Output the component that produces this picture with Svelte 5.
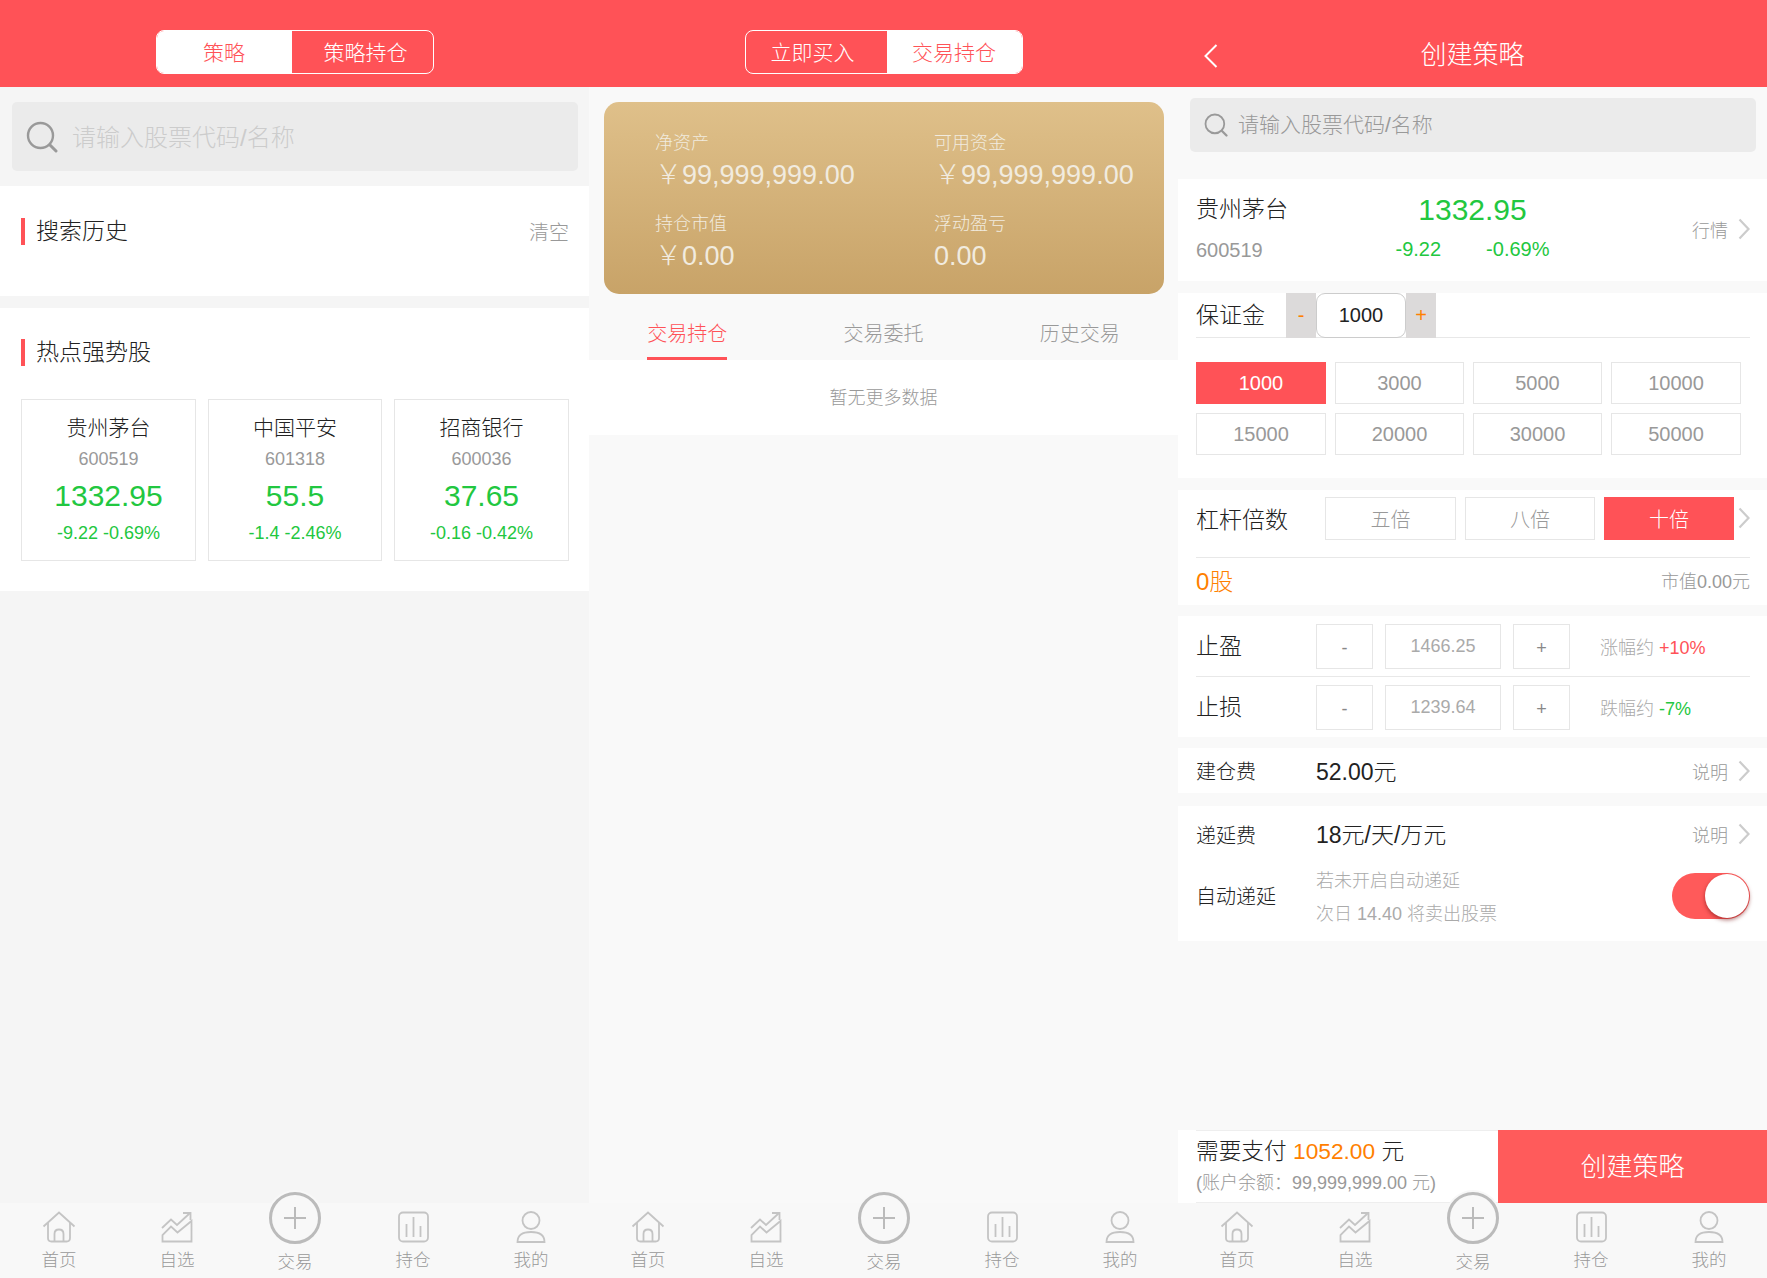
<script>
  const tabs = ["首页", "自选", "交易", "持仓", "我的"];
  const hot = [
    { name: "贵州茅台", code: "600519", price: "1332.95", diff: "-9.22 -0.69%" },
    { name: "中国平安", code: "601318", price: "55.5", diff: "-1.4 -2.46%" },
    { name: "招商银行", code: "600036", price: "37.65", diff: "-0.16 -0.42%" },
  ];
  const assets = [
    { label: "净资产", value: "￥99,999,999.00" },
    { label: "可用资金", value: "￥99,999,999.00" },
    { label: "持仓市值", value: "￥0.00" },
    { label: "浮动盈亏", value: "0.00" },
  ];
  const amounts = [1000, 3000, 5000, 10000, 15000, 20000, 30000, 50000];
  const levers = ["五倍", "八倍", "十倍"];
  const stops = [
    { label: "止盈", value: "1466.25", hint: "涨幅约", pct: "+10%", cls: "red" },
    { label: "止损", value: "1239.64", hint: "跌幅约", pct: "-7%", cls: "green" },
  ];

  let margin = 1000;
  let lever = "十倍";
</script>

{#snippet chevron()}
  <svg class="chev" width="12" height="22" viewBox="0 0 12 22"><path d="M1.5 1.5 L10.5 11 L1.5 20.5" fill="none" stroke="#ccc" stroke-width="2.2" /></svg>
{/snippet}

{#snippet searchIcon(size)}
  <svg width={size} height={size} viewBox="0 0 32 32"><circle cx="14.5" cy="14.5" r="12.5" fill="none" stroke="#999" stroke-width="2.4" /><path d="M24 24 L30 30" stroke="#999" stroke-width="3" stroke-linecap="round" /></svg>
{/snippet}

{#snippet tabbar()}
  <nav class="tabbar">
    {#each tabs as t, i}
      <div class="tab" class:mid={i === 2}>
        {#if i === 0}
          <svg width="34" height="32" viewBox="0 0 34 32" fill="none" stroke="#c4c4c4" stroke-width="1.8"><path d="M1.5 15.5 L17 1.5 L32.5 15.5" /><path d="M6 12 V27 Q6 30.5 9.5 30.5 H24.5 Q28 30.5 28 27 V12" /><path d="M12.5 30.5 V23 Q12.5 18.5 17 18.5 Q21.5 18.5 21.5 23 V30.5" /></svg>
        {:else if i === 1}
          <svg width="32" height="32" viewBox="0 0 32 32" fill="none" stroke="#c4c4c4" stroke-width="1.8"><path d="M1 17 L10 8.5 L16 14 L28.5 2.5" /><path d="M22 2 H29.5 V9" /><path d="M1.5 30.5 V24 L10 15.5 L16.5 21.5 L30.5 10 V30.5 Z" /></svg>
        {:else if i === 2}
          <span class="plus"><svg width="24" height="24" viewBox="0 0 24 24"><path d="M12 1 V23 M1 12 H23" stroke="#bbb" stroke-width="2" /></svg></span>
        {:else if i === 3}
          <svg width="31" height="32" viewBox="0 0 31 32" fill="none" stroke="#c4c4c4" stroke-width="1.8"><rect x="1" y="1.5" width="29" height="29" rx="4" /><path d="M8.5 13 V26 M15.5 6 V26 M22.5 15 V26" /></svg>
        {:else}
          <svg width="30" height="32" viewBox="0 0 30 32" fill="none" stroke="#c4c4c4" stroke-width="1.8"><circle cx="15" cy="9.5" r="8.5" /><path d="M1.5 31 Q1.5 21 15 21 Q28.5 21 28.5 31 Z" /></svg>
        {/if}
        <span class="tab-label">{t}</span>
      </div>
    {/each}
  </nav>
{/snippet}

<main class="screens">
  <!-- 策略搜索 -->
  <section class="panel first">
    <header class="top">
      <div class="seg first-seg">
        <span class="on left-part">策略</span>
        <span class="right-part">策略持仓</span>
      </div>
    </header>
    <div class="search big">
      {@render searchIcon(32)}
      <span>请输入股票代码/名称</span>
    </div>
    <div class="block history">
      <div class="title-row">
        <h2>搜索历史</h2>
        <span class="clear">清空</span>
      </div>
    </div>
    <div class="block hot">
      <div class="title-row"><h2>热点强势股</h2></div>
      <div class="cards">
        {#each hot as s}
          <div class="card">
            <div class="c-name">{s.name}</div>
            <div class="c-code">{s.code}</div>
            <div class="c-price">{s.price}</div>
            <div class="c-diff">{s.diff}</div>
          </div>
        {/each}
      </div>
    </div>
    {@render tabbar()}
  </section>

  <!-- 持仓 -->
  <section class="panel">
    <header class="top">
      <div class="seg second-seg">
        <span class="left-part">立即买入</span>
        <span class="on right-part">交易持仓</span>
      </div>
    </header>
    <div class="gold">
      {#each assets as a}
        <div class="asset">
          <div class="a-label">{a.label}</div>
          <div class="a-value">{a.value}</div>
        </div>
      {/each}
    </div>
    <div class="subtabs">
      <span class="active">交易持仓</span>
      <span>交易委托</span>
      <span>历史交易</span>
    </div>
    <div class="empty">暂无更多数据</div>
    {@render tabbar()}
  </section>

  <!-- 创建策略 -->
  <section class="panel">
    <header class="top titled">
      <svg class="back" width="14" height="24" viewBox="0 0 14 24"><path d="M12.5 1 L1.5 12 L12.5 23" fill="none" stroke="#fff" stroke-width="2" /></svg>
      <h1>创建策略</h1>
    </header>
    <div class="search small">
      {@render searchIcon(24)}
      <span>请输入股票代码/名称</span>
    </div>

    <div class="block stock">
      <div class="st-left">
        <div class="st-name">贵州茅台</div>
        <div class="st-code">600519</div>
      </div>
      <div class="st-mid">
        <div class="st-price">1332.95</div>
        <div class="st-diff"><span>-9.22</span><span>-0.69%</span></div>
      </div>
      <div class="more">行情 {@render chevron()}</div>
    </div>

    <div class="block deposit">
      <div class="dep-row">
        <span class="label-lg">保证金</span>
        <span class="step orange">-</span>
        <span class="step-input">{margin}</span>
        <span class="step orange">+</span>
      </div>
      <div class="amounts">
        {#each amounts as a}
          <button class="pick" class:sel={a === margin}>{a}</button>
        {/each}
      </div>
    </div>

    <div class="block leverage">
      <div class="lev-row">
        <span class="label-lg">杠杆倍数</span>
        <div class="levers">
          {#each levers as l}
            <button class="pick" class:sel={l === lever}>{l}</button>
          {/each}
        </div>
        {@render chevron()}
      </div>
      <div class="shares">
        <span class="share-num">0股</span>
        <span class="gray">市值0.00元</span>
      </div>
    </div>

    <div class="block stops">
      {#each stops as s}
        <div class="stop">
          <span class="label-lg w-label">{s.label}</span>
          <span class="box sq">-</span>
          <span class="box val">{s.value}</span>
          <span class="box sq">+</span>
          <span class="hint">{s.hint} <b class={s.cls}>{s.pct}</b></span>
        </div>
      {/each}
    </div>

    <div class="block fee">
      <span class="label-md w-label">建仓费</span>
      <span class="fee-val">52.00元</span>
      <div class="more">说明 {@render chevron()}</div>
    </div>

    <div class="block defer">
      <div class="fee inner">
        <span class="label-md w-label">递延费</span>
        <span class="fee-val">18元/天/万元</span>
        <div class="more">说明 {@render chevron()}</div>
      </div>
      <div class="auto">
        <span class="label-md w-label auto-label">自动递延</span>
        <div class="auto-text">
          <div>若未开启自动递延</div>
          <div>次日 14.40 将卖出股票</div>
        </div>
        <span class="toggle"><i></i></span>
      </div>
    </div>

    <div class="paybar">
      <div class="pay-info">
        <div class="pay-main">需要支付 <span class="orange-t">1052.00</span> 元</div>
        <div class="pay-sub">(账户余额：99,999,999.00 元)</div>
      </div>
      <button class="pay-btn">创建策略</button>
    </div>
    {@render tabbar()}
  </section>
</main>

<style>
  :global(body) {
    margin: 0;
    font-family: "Liberation Sans", "Noto Sans CJK SC", sans-serif;
    font-weight: 300;
    color: #222;
  }
  .screens {
    display: grid;
    grid-template-columns: repeat(3, 589px);
    height: 1278px;
    overflow: hidden;
  }
  .panel {
    display: flex;
    flex-direction: column;
    height: 1278px;
    background: #f9f9f9;
  }
  .panel.first {
    background: #f5f5f5;
  }
  .top {
    flex: none;
    height: 87px;
    box-sizing: border-box;
    padding-top: 30px;
    background: #ff5257;
    color: #fff;
    display: flex;
    justify-content: center;
    position: relative;
  }
  .seg {
    display: flex;
    width: 278px;
    height: 44px;
    box-sizing: border-box;
    border: 1px solid #fff;
    border-radius: 8px;
    overflow: hidden;
    font-size: 21px;
    line-height: 44px;
    text-align: center;
  }
  .seg span {
    display: block;
    height: 42px;
    box-sizing: border-box;
  }
  .first-seg .left-part {
    width: 135px;
  }
  .first-seg .right-part {
    flex: 1;
    padding-left: 7px;
  }
  .second-seg .left-part {
    width: 141px;
    padding-right: 7px;
  }
  .second-seg .right-part {
    flex: 1;
  }
  .seg .on {
    background: #fff;
    color: #ff5257;
  }
  .titled {
    padding-top: 0;
    align-items: center;
  }
  .titled h1 {
    margin: 18px 0 0;
    font-size: 26px;
    font-weight: 300;
  }
  .back {
    position: absolute;
    left: 26px;
    top: 44px;
  }
  .search {
    display: flex;
    align-items: center;
    flex: none;
    background: #ebebeb;
    border-radius: 5px;
    box-sizing: border-box;
  }
  .search.big {
    height: 69px;
    margin: 15px 11px 15px 12px;
    padding-left: 14px;
    gap: 14px;
    font-size: 24px;
    color: #ccc;
  }
  .search.big span {
    margin-bottom: 2px;
  }
  .search.small {
    height: 54px;
    margin: 11px 11px 27px 12px;
    padding-left: 14px;
    gap: 10px;
    font-size: 21px;
    color: #999;
  }
  .search.small span {
    margin-bottom: 4px;
  }
  .block {
    flex: none;
    background: #fff;
    box-sizing: border-box;
  }
  .history {
    height: 110px;
    padding: 32px 20px 0 21px;
    margin-bottom: 12px;
  }
  .hot {
    height: 283px;
    padding: 31px 20px 0 21px;
  }
  .title-row {
    display: flex;
    justify-content: space-between;
    align-items: center;
    height: 27px;
  }
  .title-row h2 {
    margin: 0;
    font-size: 23px;
    font-weight: 300;
    border-left: 4px solid #ff5257;
    padding-left: 11px;
    height: 27px;
    line-height: 27px;
  }
  .clear {
    font-size: 20px;
    color: #999;
  }
  .cards {
    display: grid;
    grid-template-columns: 175px 174px 175px;
    gap: 12px;
    margin-top: 33px;
  }
  .card {
    height: 162px;
    box-sizing: border-box;
    border: 1px solid #e6e6e6;
    text-align: center;
    padding-top: 12px;
  }
  .c-name {
    font-size: 21px;
    line-height: 32px;
  }
  .c-code {
    font-size: 18px;
    line-height: 30px;
    margin-bottom: 1px;
    color: #999;
  }
  .c-price {
    font-size: 30px;
    line-height: 42px;
    margin-bottom: 1px;
    color: #22c740;
  }
  .c-diff {
    font-size: 18px;
    line-height: 30px;
    color: #22c740;
  }
  .gold {
    flex: none;
    margin: 15px 14px 0 15px;
    height: 192px;
    box-sizing: border-box;
    padding: 26px 0 0 51px;
    border-radius: 15px;
    background: linear-gradient(#dfc08a, #c8a368);
    display: grid;
    grid-template-columns: 279px 1fr;
    grid-auto-rows: 70px;
    row-gap: 11px;
    color: #f1ebdf;
  }
  .a-label {
    font-size: 18px;
    line-height: 30px;
  }
  .a-value {
    font-size: 27px;
    line-height: 36px;
    margin-top: -1px;
  }
  .subtabs {
    flex: none;
    display: grid;
    grid-template-columns: repeat(3, 1fr);
    height: 66px;
    font-size: 20px;
    color: #999;
    text-align: center;
  }
  .subtabs span {
    justify-self: center;
    width: 80px;
    line-height: 80px;
    box-sizing: border-box;
  }
  .subtabs .active {
    color: #ff5257;
    border-bottom: 3px solid #ff5257;
    height: 66px;
  }
  .empty {
    flex: none;
    height: 75px;
    line-height: 77px;
    background: #fff;
    text-align: center;
    font-size: 18px;
    color: #999;
  }
  .tabbar {
    flex: none;
    margin-top: auto;
    height: 75px;
    background: #f8f8f8;
    display: grid;
    grid-template-columns: repeat(5, 118px);
    position: relative;
    z-index: 2;
  }
  .tab {
    display: flex;
    flex-direction: column;
    align-items: center;
    padding-top: 8px;
    font-size: 17.5px;
    color: #999;
  }
  .tab-label {
    line-height: 26px;
    margin-top: 4px;
  }
  .tab.mid {
    padding-top: 0;
    margin-top: -11px;
  }
  .mid .tab-label {
    margin-top: 5px;
  }
  .plus {
    width: 52px;
    height: 52px;
    box-sizing: border-box;
    border: 3px solid #bbb;
    border-radius: 50%;
    background: #f8f8f8;
    box-shadow: 0 0 0 2px #f8f8f8;
    display: flex;
    align-items: center;
    justify-content: center;
  }

  /* 创建策略 */
  .stock {
    height: 102px;
    margin-bottom: 12px;
    padding: 0 17px 0 18px;
    display: flex;
    align-items: flex-start;
    position: relative;
  }
  .st-left {
    padding-top: 10px;
  }
  .st-name {
    font-size: 23px;
    line-height: 40px;
  }
  .st-code {
    font-size: 20px;
    line-height: 32px;
    margin-top: 5px;
    color: #999;
  }
  .st-mid {
    position: absolute;
    left: 0;
    right: 0;
    top: 11px;
    text-align: center;
    color: #22c740;
  }
  .st-price {
    font-size: 30px;
    line-height: 40px;
  }
  .st-diff {
    font-size: 20px;
    line-height: 32px;
    margin-top: 3px;
    display: flex;
    justify-content: center;
    gap: 45px;
  }
  .more {
    margin-left: auto;
    display: flex;
    align-items: center;
    gap: 10px;
    font-size: 18px;
    color: #999;
    position: relative;
  }
  .stock .more {
    align-self: center;
    margin-top: -2px;
  }
  .chev {
    flex: none;
  }
  .deposit {
    height: 185px;
    margin-bottom: 12px;
    padding: 0 17px 0 18px;
  }
  .dep-row {
    height: 45px;
    box-sizing: border-box;
    display: flex;
    align-items: center;
    border-bottom: 1px solid #e8e8e8;
  }
  .label-lg {
    font-size: 23px;
  }
  .dep-row .label-lg {
    width: 90px;
    margin-bottom: 4px;
  }
  .step {
    width: 30px;
    height: 45px;
    line-height: 45px;
    text-align: center;
    background: #dcdada;
    font-size: 20px;
  }
  .orange {
    color: #ff8000;
  }
  .step-input {
    width: 90px;
    height: 45px;
    line-height: 43px;
    box-sizing: border-box;
    border: 1px solid #ccc;
    border-radius: 9px;
    background: #fff;
    text-align: center;
    font-size: 20px;
  }
  .amounts {
    display: grid;
    grid-template-columns: 130px 129px 129px 130px;
    grid-auto-rows: 42px;
    gap: 9px 9px;
    margin-top: 24px;
  }
  .pick {
    padding: 0;
    font: inherit;
    font-size: 20px;
    color: #999;
    background: #fff;
    border: 1px solid #e6e6e6;
  }
  .pick.sel {
    background: #ff5257;
    border-color: #ff5257;
    color: #fff;
  }
  .leverage {
    height: 115px;
    margin-bottom: 11px;
    padding: 7px 17px 0 18px;
  }
  .lev-row {
    display: flex;
    align-items: center;
    height: 61px;
    padding-bottom: 18px;
    box-sizing: border-box;
    border-bottom: 1px solid #e8e8e8;
    position: relative;
  }
  .lev-row .label-lg {
    width: 130px;
  }
  .levers {
    display: grid;
    grid-template-columns: 131px 130px 130px;
    grid-auto-rows: 43px;
    gap: 9px;
  }
  .lev-row .chev {
    margin-left: 4px;
  }
  .shares {
    display: flex;
    justify-content: space-between;
    align-items: center;
    height: 47px;
  }
  .share-num {
    font-size: 24px;
    color: #ff8000;
    margin-bottom: 4px;
  }
  .gray {
    font-size: 18px;
    color: #999;
    margin-bottom: 3px;
  }
  .stops {
    height: 121px;
    margin-bottom: 11px;
    padding: 0 17px 0 18px;
  }
  .stop {
    display: flex;
    align-items: center;
    height: 60px;
  }
  .stop:first-child {
    border-bottom: 1px solid #e8e8e8;
  }
  .w-label {
    width: 120px;
    flex: none;
  }
  .stop .label-lg {
    margin-bottom: 4px;
  }
  .box {
    height: 45px;
    line-height: 43px;
    box-sizing: border-box;
    border: 1px solid #e6e6e6;
    text-align: center;
    color: #aaa;
    font-size: 18px;
  }
  .sq {
    width: 57px;
    line-height: 47px;
    color: #888;
  }
  .val {
    width: 116px;
    margin: 0 12px;
  }
  .hint {
    margin-left: 30px;
    font-size: 18px;
    color: #aaa;
  }
  .hint b {
    font-weight: 300;
  }
  .red {
    color: #ff5257;
  }
  .green {
    color: #22c740;
  }
  .fee {
    height: 45px;
    margin-bottom: 13px;
    padding: 0 17px 0 18px;
    display: flex;
    align-items: center;
  }
  .fee.inner {
    margin: 0;
    padding: 0;
    height: 56px;
  }
  .label-md {
    font-size: 20px;
  }
  .fee-val {
    font-size: 23px;
    margin-bottom: 2px;
  }
  .defer {
    height: 135px;
    padding: 0 17px 0 18px;
  }
  .auto {
    display: flex;
    align-items: center;
    height: 72px;
  }
  .auto-label {
    margin-bottom: 6px;
  }
  .auto-text {
    font-size: 18px;
    line-height: 33px;
    color: #aaa;
  }
  .toggle {
    margin-left: auto;
    margin-bottom: 4px;
    width: 78px;
    height: 46px;
    border-radius: 23px;
    background: #ff5a5a;
    display: flex;
    justify-content: flex-end;
    align-items: center;
    padding-right: 1px;
    box-sizing: border-box;
  }
  .toggle i {
    width: 44px;
    height: 44px;
    border-radius: 50%;
    background: #fff;
    box-shadow: 0 2px 4px rgba(120, 20, 20, 0.6);
  }
  .paybar {
    flex: none;
    margin-top: auto;
    height: 73px;
    display: flex;
    background: #fff;
  }
  .paybar + .tabbar {
    margin-top: 0;
  }
  .pay-info {
    width: 302px;
    margin-left: 18px;
    box-sizing: border-box;
    padding-top: 4px;
    border-top: 1px solid #eee;
    border-bottom: 1px solid #eee;
  }
  .pay-main {
    font-size: 22.7px;
    line-height: 32px;
  }
  .orange-t {
    color: #ff8000;
  }
  .pay-sub {
    font-size: 18px;
    line-height: 30px;
    margin-top: 1px;
    color: #999;
  }
  .pay-btn {
    flex: 1;
    border: 0;
    padding: 0 0 4px;
    background: #ff5b5b;
    color: #fff;
    font: inherit;
    font-size: 26px;
  }
</style>
